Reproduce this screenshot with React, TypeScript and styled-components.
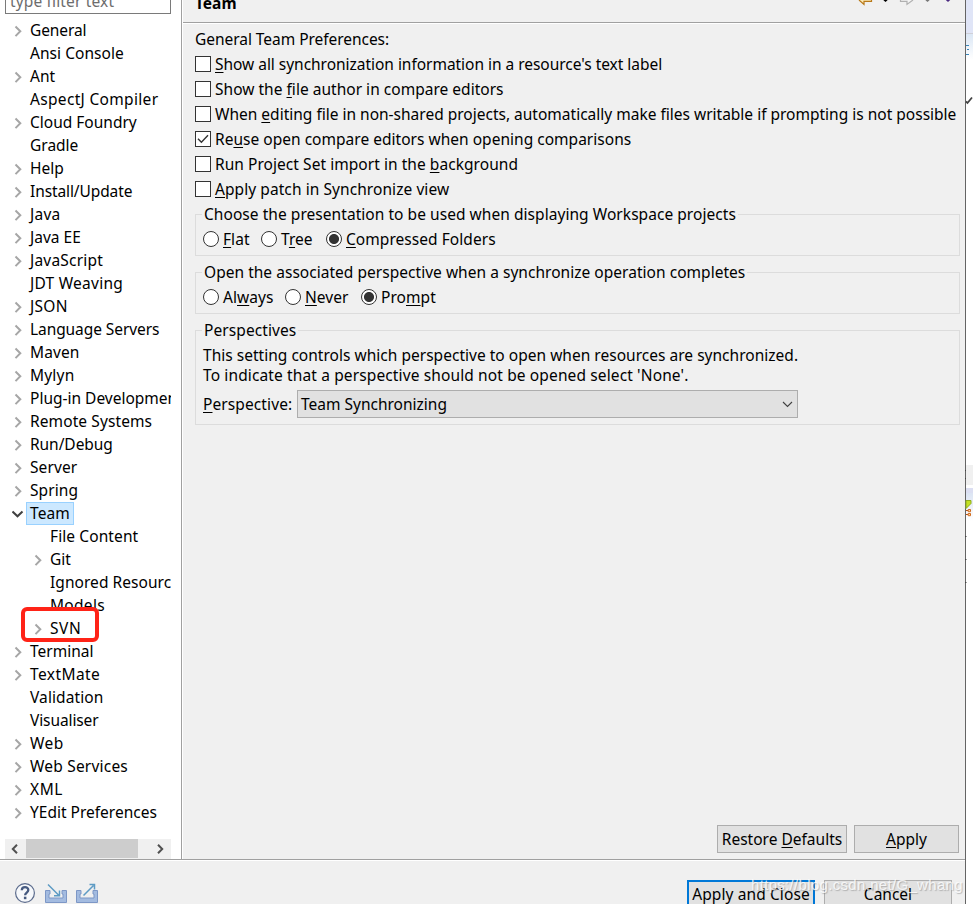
import React from 'react';
import styled, { createGlobalStyle } from 'styled-components';

const GlobalStyle = createGlobalStyle`
  * { box-sizing: border-box; }
  body { margin: 0; overflow: hidden; background: #fff; }
  u { text-decoration: underline; text-decoration-thickness: 1px; text-underline-offset: 2px; text-decoration-skip-ink: none; }
`;

const Screen = styled.div`
  display: flex;
  width: 973px;
  height: 904px;
  overflow: hidden;
  font: 15.5px/23px 'Noto Sans', 'Open Sans', sans-serif;
  color: #000;
  white-space: nowrap;
`;

const Dialog = styled.div`
  display: flex;
  flex-direction: column;
  width: 966px;
  height: 904px;
  flex: none;
  background: #f0f0f0;
  border-right: 1px solid #646464;
`;

const Body = styled.div`
  display: flex;
  height: 860px;
  flex: none;
  border-bottom: 1px solid #a0a0a0;
`;

/* ---- Navigation ---- */

const Sidebar = styled.nav`
  display: flex;
  flex-direction: column;
  width: 182px;
  flex: none;
  padding: 0 10px 0 5px;
  background: #fff;
  border-right: 1px solid #a0a0a0;
`;

const FilterBox = styled.div`
  width: 166px;
  height: 27px;
  flex: none;
  margin: -13px 0 5px;
  padding: 1px 4px 0;
  border: 1px solid #7a7a7a;
  line-height: 25px;
  letter-spacing: 0.15px;
  color: #6d6d6d;
`;

const Tree = styled.ul`
  width: 166px;
  margin: 0;
  padding: 0;
  overflow: hidden;
  list-style: none;
`;

const TreeRow = styled.li<{ $child?: boolean }>`
  display: flex;
  align-items: center;
  height: 23px;
  padding-left: ${p => (p.$child ? 27 : 7)}px;
`;

const Twisty = styled.span`
  display: flex;
  justify-content: center;
  width: 12px;
  flex: none;
`;

const TreeLabel = styled.span<{ $selected?: boolean; $spacing?: number }>`
  height: 23px;
  margin-left: 2px;
  padding: 0 3px;
  border: 1px solid ${p => (p.$selected ? '#99d1ff' : 'transparent')};
  background: ${p => (p.$selected ? '#cce8ff' : 'transparent')};
  line-height: 21px;
  letter-spacing: ${p => p.$spacing ?? 0}px;
`;

const HScroll = styled.div`
  display: flex;
  align-items: center;
  width: 166px;
  height: 20px;
  flex: none;
  margin-top: 15px;
  padding: 0 6px 0 6px;
  background: #f0f0f0;
`;

const HThumb = styled.div`
  width: 112px;
  height: 19px;
  margin: 0 19px 1px 8px;
  flex: none;
  background: #cdcdcd;
`;

const HighlightBox = styled.div`
  position: absolute;
  left: 21px;
  top: 607px;
  width: 78px;
  height: 35px;
  border: 4px solid #ff2317;
  border-radius: 6px;
`;

/* ---- Preference page ---- */

const Page = styled.main`
  display: flex;
  flex-direction: column;
  flex: 1;
  border-left: 1px solid #fff;
`;

const PageHeader = styled.header`
  display: flex;
  justify-content: space-between;
  height: 24px;
  flex: none;
  padding-left: 12px;
  border-bottom: 1px solid #fff;
  box-shadow: inset 0 -1px #a0a0a0;
`;

const PageTitle = styled.h1`
  margin: -8px 0 0;
  font-size: 15.5px;
  font-weight: 700;
  line-height: 23px;
`;

const PageContent = styled.section`
  display: flex;
  flex-direction: column;
  flex: 1;
  padding: 4px 5px 6px 12px;
`;

const Intro = styled.div`
  height: 24px;
  line-height: 22px;
  letter-spacing: -0.04px;
`;

const CheckRow = styled.label`
  display: flex;
  align-items: flex-start;
  gap: 4px;
  height: 25px;
  line-height: 25px;
`;

const CheckSquare = styled.span`
  display: flex;
  align-items: center;
  justify-content: center;
  width: 16px;
  height: 16px;
  flex: none;
  margin-top: 4px;
  border: 1px solid #333;
  background: #fff;
`;

const CheckText = styled.span<{ $spacing?: number }>`
  letter-spacing: ${p => p.$spacing ?? 0}px;
`;

const Group = styled.section<{ $top: number; $height: number }>`
  width: 765px;
  height: ${p => p.$height}px;
  flex: none;
  margin-top: ${p => p.$top}px;
  padding: 0 7px;
  border: 1px solid #dcdcdc;
`;

const GroupTitle = styled.h2<{ $spacing?: number }>`
  width: max-content;
  height: 24px;
  margin: -12px 0 0 -1px;
  padding: 0 2px;
  background: #f0f0f0;
  font-size: 15.5px;
  font-weight: 400;
  line-height: 22px;
  letter-spacing: ${p => p.$spacing ?? 0}px;
`;

const RadioRow = styled.div<{ $columns: string }>`
  display: grid;
  grid-template-columns: ${p => p.$columns};
  height: 25px;
`;

const RadioItem = styled.label`
  display: flex;
  align-items: center;
  gap: 4px;
  letter-spacing: 0.05px;
`;

const RadioCircle = styled.span<{ $on?: boolean }>`
  width: 16px;
  height: 16px;
  flex: none;
  margin-bottom: 2px;
  border: 1px solid #333;
  border-radius: 50%;
  background: ${p => (p.$on ? 'radial-gradient(circle, #333 4.6px, #fff 5.4px)' : '#fff')};
`;

const Description = styled.div`
  display: flex;
  flex-direction: column;
  margin: 2px 0 5px;
`;

const DescriptionLine = styled.span<{ $spacing: number }>`
  line-height: 20px;
  letter-spacing: ${p => p.$spacing}px;
`;

const ComboRow = styled.div`
  display: flex;
  align-items: center;
`;

const ComboLabel = styled.span`
  width: 94px;
  letter-spacing: 0.1px;
`;

const Combo = styled.div`
  display: flex;
  align-items: center;
  justify-content: space-between;
  width: 501px;
  height: 28px;
  padding: 0 4px 0 3px;
  border: 1px solid #adadad;
  background: #e1e1e1;
`;

const ButtonRow = styled.div`
  display: flex;
  justify-content: flex-end;
  gap: 7px;
  margin-top: auto;
  padding-right: 1px;
`;

const Button = styled.button<{ $width: number; $primary?: boolean }>`
  width: ${p => p.$width}px;
  height: 28px;
  flex: none;
  padding: 0;
  border: ${p => (p.$primary ? '2px solid #0078d7' : '1px solid #adadad')};
  background: #e1e1e1;
  color: #000;
  font: inherit;
  line-height: ${p => (p.$primary ? 23 : 26)}px;
  letter-spacing: ${p => (p.$primary ? 0.1 : 0)}px;
`;

/* ---- Footer ---- */

const Footer = styled.footer`
  display: flex;
  justify-content: space-between;
  height: 44px;
  flex: none;
  overflow: hidden;
  padding: 20px 13px 0 14px;
  box-shadow: inset 0 1px #fff;
`;

const FooterIcons = styled.div`
  display: flex;
  gap: 9px;
  padding-top: 2px;
`;

const FooterButtons = styled.div`
  display: flex;
  gap: 9px;
`;

const Watermark = styled.div`
  position: absolute;
  left: 751px;
  top: 874px;
  width: 215px;
  font: 15px/22px 'Liberation Sans', sans-serif;
  letter-spacing: 0.32px;
  color: rgba(255, 255, 255, 0.8);
  text-shadow: 1px 1px 1px rgba(130, 130, 130, 0.5);
`;

/* ---- Window behind the dialog ---- */

const Behind = styled.aside`
  position: relative;
  display: flex;
  flex-direction: column;
  width: 7px;
  flex: none;
  background: #fff;
`;

const Band = styled.div<{ $height: number; $fill: string }>`
  height: ${p => p.$height}px;
  flex: none;
  background: ${p => p.$fill};
`;

const PeekingIcons = styled.svg`
  position: absolute;
  left: -1px;
  top: 0;
`;

const Chevron = ({ open }: { open?: boolean }) =>
  open ? (
    <svg width="12" height="8" viewBox="0 0 12 8" fill="none" stroke="#404040" strokeWidth="2">
      <path d="M.5 1.5 5.5 6.3 10.5 1.5" />
    </svg>
  ) : (
    <svg width="8" height="12" viewBox="0 0 8 12" fill="none" stroke="#a6a6a6" strokeWidth="2">
      <path d="M1.5 1.5 6.3 6.3 1.5 11.1" />
    </svg>
  );

const ScrollArrow = ({ right }: { right?: boolean }) => (
  <svg width="7" height="10" viewBox="0 0 7 10" fill="none" stroke="#505050" strokeWidth="2">
    <path d={right ? 'M1 .8 5.2 5 1 9.2' : 'M6 .8 1.8 5 6 9.2'} />
  </svg>
);

const Tools = () => (
  <svg width="110" height="8" viewBox="855 0 110 8">
    <path d="M859 0 864 4.4V1.4H871.5V0" fill="#fbe9b4" stroke="#b8791a" strokeWidth="1.2" />
    <path d="M883.3 0H887.7L885.5 2Z" fill="#000" />
    <path d="M900.5 0V1.4H907V4.4L913 0" fill="#f4f4f4" stroke="#b0b0b0" strokeWidth="1.2" />
    <path d="M925.3 0H929.7L927.5 2Z" fill="#777" />
    <path d="M945.8 0H950.2L948 2Z" fill="#4b2a80" />
  </svg>
);

const HelpIcon = () => (
  <svg width="22" height="22" viewBox="0 0 22 22" fill="none">
    <circle cx="11" cy="11" r="9.4" fill="#f6f8fb" stroke="#5b6b8c" strokeWidth="1.2" />
    <path d="M7.8 8.3C7.8 4.2 14.3 4.2 14.3 8.1 14.3 10.5 11.1 10.6 11.1 13.2" stroke="#465a80" strokeWidth="2.3" />
    <rect x="9.9" y="14.7" width="2.5" height="2.5" fill="#465a80" />
  </svg>
);

const TrayIcon = ({ out }: { out?: boolean }) => (
  <svg width="22" height="22" viewBox="0 0 22 22" fill="none">
    <path d="M.5 8.5H5V12H4V16H18V12H17V8.5H21.5V20.5H.5Z" fill="#a3bbe0" stroke="#7d97c6" />
    <path
      d={out ? 'M7.5 13.5 17.5 3.5M13.5 2.5H18.5V7.5' : 'M3 2.5 14 13.5M14.5 8.5V13.8H9'}
      stroke="#5e9bc4"
      strokeWidth="1.5"
    />
  </svg>
);

type Node = { name: string; leaf?: boolean; open?: boolean; child?: boolean; spacing?: number };

const nodes: Node[] = [
  { name: 'General', spacing: -0.1 },
  { name: 'Ansi Console', leaf: true, spacing: 0.05 },
  { name: 'Ant' },
  { name: 'AspectJ Compiler', leaf: true, spacing: 0.32 },
  { name: 'Cloud Foundry' },
  { name: 'Gradle', leaf: true },
  { name: 'Help' },
  { name: 'Install/Update', spacing: -0.1 },
  { name: 'Java', spacing: 0.25 },
  { name: 'Java EE' },
  { name: 'JavaScript', spacing: 0.2 },
  { name: 'JDT Weaving', leaf: true, spacing: 0.25 },
  { name: 'JSON', spacing: 0.3 },
  { name: 'Language Servers', spacing: -0.08 },
  { name: 'Maven', spacing: 0.1 },
  { name: 'Mylyn', spacing: 0.2 },
  { name: 'Plug-in Development' },
  { name: 'Remote Systems', spacing: 0.1 },
  { name: 'Run/Debug', spacing: -0.05 },
  { name: 'Server', spacing: 0.1 },
  { name: 'Spring', spacing: 0.1 },
  { name: 'Team', open: true, spacing: 0.1 },
  { name: 'File Content', leaf: true, child: true, spacing: 0.1 },
  { name: 'Git', child: true },
  { name: 'Ignored Resources', leaf: true, child: true, spacing: 0.05 },
  { name: 'Models', leaf: true, child: true, spacing: 0.3 },
  { name: 'SVN', child: true, spacing: 0.6 },
  { name: 'Terminal' },
  { name: 'TextMate', spacing: 0.42 },
  { name: 'Validation', leaf: true, spacing: 0.1 },
  { name: 'Visualiser', leaf: true, spacing: -0.1 },
  { name: 'Web', spacing: 0.4 },
  { name: 'Web Services', spacing: 0.2 },
  { name: 'XML', spacing: 0.6 },
  { name: 'YEdit Preferences' },
];

const Check = ({ on, spacing, children }: { on?: boolean; spacing?: number; children: React.ReactNode }) => (
  <CheckRow>
    <CheckSquare>
      {on && (
        <svg width="12" height="10" viewBox="0 0 12 10" fill="none" stroke="#333" strokeWidth="1.4">
          <path d="M1 4.8 4.4 8.3 11 1.3" />
        </svg>
      )}
    </CheckSquare>
    <CheckText $spacing={spacing}>{children}</CheckText>
  </CheckRow>
);

const Radio = ({ on, children }: { on?: boolean; children: React.ReactNode }) => (
  <RadioItem>
    <RadioCircle $on={on} />
    <span>{children}</span>
  </RadioItem>
);

export default function App() {
  return (
    <>
      <GlobalStyle />
      <Screen>
        <Dialog>
          <Body>
            <Sidebar>
              <FilterBox>type filter text</FilterBox>
              <Tree>
                {nodes.map(n => (
                  <TreeRow key={n.name} $child={n.child}>
                    <Twisty>{!n.leaf && <Chevron open={n.open} />}</Twisty>
                    <TreeLabel $selected={n.open} $spacing={n.spacing}>{n.name}</TreeLabel>
                  </TreeRow>
                ))}
              </Tree>
              <HScroll>
                <ScrollArrow />
                <HThumb />
                <ScrollArrow right />
              </HScroll>
            </Sidebar>
            <Page>
              <PageHeader>
                <PageTitle>Team</PageTitle>
                <Tools />
              </PageHeader>
              <PageContent>
                <Intro>General Team Preferences:</Intro>
                <Check spacing={-0.03}><u>S</u>how all synchronization information in a resource's text label</Check>
                <Check spacing={0.02}>Show the <u>f</u>ile author in compare editors</Check>
                <Check>When <u>e</u>diting file in non-shared projects, automatically make files writable if prompting is not possible</Check>
                <Check on spacing={0.02}>Re<u>u</u>se open compare editors when opening comparisons</Check>
                <Check spacing={0.05}>Run Project Set import in the <u>b</u>ackground</Check>
                <Check spacing={0.07}><u>A</u>pply patch in Synchronize view</Check>
                <Group $top={12} $height={42}>
                  <GroupTitle $spacing={0.05}>Choose the presentation to be used when displaying Workspace projects</GroupTitle>
                  <RadioRow $columns="58px 65px auto">
                    <Radio><u>F</u>lat</Radio>
                    <Radio>T<u>r</u>ee</Radio>
                    <Radio on><u>C</u>ompressed Folders</Radio>
                  </RadioRow>
                </Group>
                <Group $top={16} $height={42}>
                  <GroupTitle $spacing={0.03}>Open the associated perspective when a synchronize operation completes</GroupTitle>
                  <RadioRow $columns="82px 76px auto">
                    <Radio>Al<u>w</u>ays</Radio>
                    <Radio><u>N</u>ever</Radio>
                    <Radio on>Pro<u>m</u>pt</Radio>
                  </RadioRow>
                </Group>
                <Group $top={16} $height={95}>
                  <GroupTitle $spacing={0.08}>Perspectives</GroupTitle>
                  <Description>
                    <DescriptionLine $spacing={0.02}>
                      This setting controls which perspective to open when resources are synchronized.
                    </DescriptionLine>
                    <DescriptionLine $spacing={0.125}>
                      To indicate that a perspective should not be opened select 'None'.
                    </DescriptionLine>
                  </Description>
                  <ComboRow>
                    <ComboLabel><u>P</u>erspective:</ComboLabel>
                    <Combo>
                      <span>Team Synchronizing</span>
                      <svg width="11" height="7" viewBox="0 0 11 7" fill="none" stroke="#404040" strokeWidth="1.1">
                        <path d="M1 1 5.5 5.5 10 1" />
                      </svg>
                    </Combo>
                  </ComboRow>
                </Group>
                <ButtonRow>
                  <Button $width={130}>Restore <u>D</u>efaults</Button>
                  <Button $width={105}><u>A</u>pply</Button>
                </ButtonRow>
              </PageContent>
            </Page>
          </Body>
          <Footer>
            <FooterIcons>
              <HelpIcon />
              <TrayIcon />
              <TrayIcon out />
            </FooterIcons>
            <FooterButtons>
              <Button $width={128} $primary>Apply and Close</Button>
              <Button $width={128}>Cancel</Button>
            </FooterButtons>
          </Footer>
        </Dialog>
        <Behind>
          <Band $height={33} $fill="#e0e5f7" />
          <Band $height={1} $fill="#d0d0d8" />
          <Band $height={26} $fill="linear-gradient(#dbe7f5, #ffffff)" />
          <Band $height={405} $fill="#fff" />
          <Band $height={20} $fill="#f0f0f0" />
          <Band $height={3} $fill="#fff" />
          <Band $height={5} $fill="#dcdff2" />
          <Band $height={28} $fill="linear-gradient(#dbe4f3, #ffffff)" />
          <PeekingIcons width="8" height="600" viewBox="0 0 8 600" fill="none">
            <path d="M1 45.5H4M2 49.5H4M1 54.5H4" stroke="#3a86b8" />
            <path d="M1 101.5 2.5 103 7 97.5" stroke="#444" strokeWidth="1.8" />
            <path d="M1 500.5H6V503.5L1 508.5Z" fill="#c3e021" stroke="#8fae1c" />
            <path d="M1 510.5H3M1 514.5H3" stroke="#b5521b" />
            <path d="M3.2 509.5H5.5V511.7H3.2ZM3.2 513.5H5.5V515.7H3.2Z" fill="#ffd9a8" stroke="#cf6a1c" />
            <path d="M0 470.5H1M0 478.5H1M0 536.5H1.5M0 559.5H1.5M0 582.5H1.5" stroke="#444" />
          </PeekingIcons>
        </Behind>
        <HighlightBox />
        <Watermark>https://blog.csdn.net/G_whang</Watermark>
      </Screen>
    </>
  );
}
